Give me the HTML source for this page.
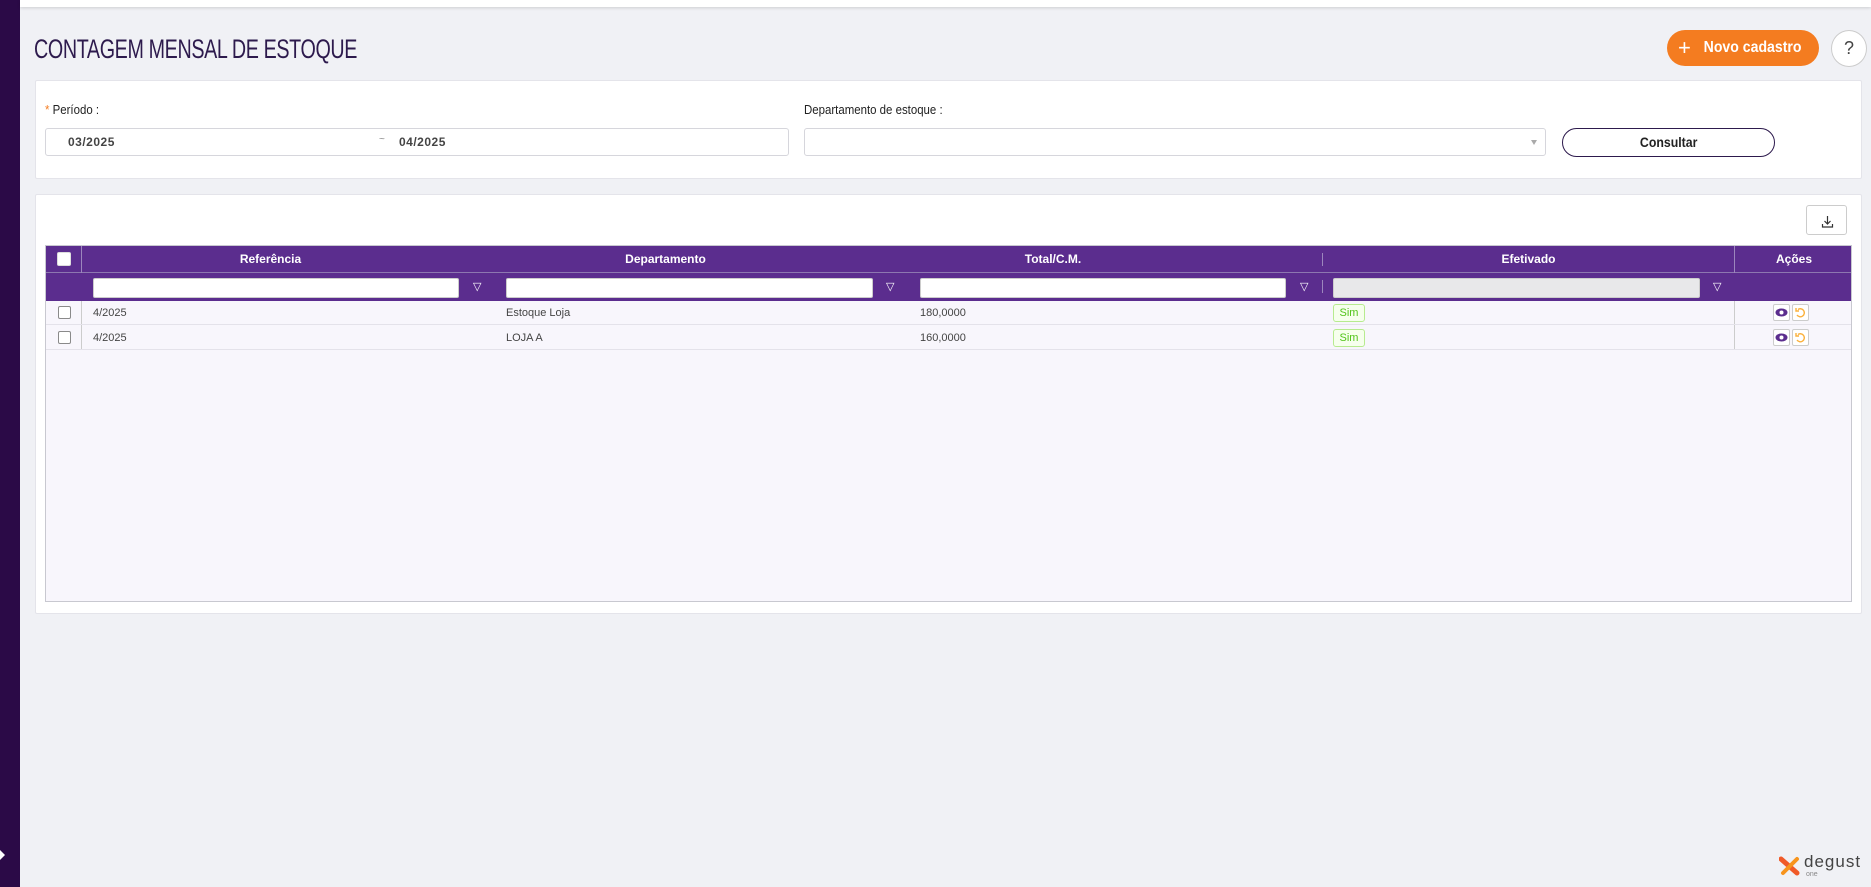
<!DOCTYPE html>
<html><head><meta charset="utf-8"><style>
*{box-sizing:border-box;margin:0;padding:0}
body{width:1871px;height:887px;background:#f0f1f5;font-family:"Liberation Sans",sans-serif;position:relative;overflow:hidden;color:#333}
.side{position:absolute;left:0;top:0;width:20px;height:887px;background:#2b0a47}
.side:after{content:"";position:absolute;left:0;top:850px;border-left:5px solid #fff;border-top:5px solid transparent;border-bottom:5px solid transparent}
.topbar{position:absolute;left:20px;top:0;right:0;height:7px;background:#fff;box-shadow:0 1px 3px rgba(0,0,0,.15)}
.title{position:absolute;left:34px;top:34px;font-size:27px;color:#2d1a4d;font-weight:400;letter-spacing:-.5px;transform:scaleX(.73);transform-origin:left;white-space:nowrap}
.btn-new{position:absolute;left:1667px;top:30px;width:152px;height:36px;background:#f47c20;border-radius:18px;color:#fff;font-weight:bold;font-size:16px;display:flex;align-items:center;justify-content:center;gap:6px}
.btn-new b{font-size:22px;font-weight:400;line-height:1}
.btn-new span{display:inline-block;transform:scaleX(.88)}
.help{position:absolute;left:1831px;top:30px;width:36px;height:37px;border-radius:50%;border:1px solid #ccc;background:#fff;text-align:center;line-height:35px;font-size:18px;color:#444}
.card{position:absolute;left:35px;width:1827px;background:#fff;border:1px solid #e4e4ea;border-radius:2px}
.lbl{position:absolute;font-size:13px;color:#222;transform:scaleX(.88);transform-origin:left;white-space:nowrap}
.inp{position:absolute;height:28px;border:1px solid #d6d6dc;border-radius:3px;background:#fff}
.consult{position:absolute;left:1562px;top:128px;width:213px;height:29px;border:1.5px solid #2d1a4d;border-radius:15px;text-align:center;line-height:26px;font-weight:bold;font-size:14px;color:#222}
.consult span{display:inline-block;transform:scaleX(.88)}
.tbl{position:absolute;left:45px;top:245px;width:1807px;height:357px;border:1px solid #c8c8d0;background:#f8f6fc}
.hdr{position:absolute;left:0;top:0;width:100%;height:27px;background:#5b2d8e;border-bottom:1px solid #8d77b0}
.frow{position:absolute;left:0;top:27px;width:100%;height:28px;background:#5b2d8e}
.hc{position:absolute;top:0;height:27px;line-height:27px;color:#fff;font-weight:bold;font-size:12px;text-align:center}
.vl{position:absolute;width:1px;background:#aaa;}
.fi{position:absolute;top:5px;height:20px;background:#fff;border:1px solid #ccc;border-radius:2px}
.fic{position:absolute;top:7px;color:#fff;font-size:11px}
.row{position:absolute;left:0;width:100%;height:24px;font-size:11px;color:#444;line-height:24px;border-bottom:1px solid #e4e2ea}
.cb{position:absolute;width:13px;height:13px;border:1px solid #8a8a8a;border-radius:2px;background:#fff}
.sim{position:absolute;left:1287px;top:3px;width:32px;height:18px;border:1px solid #b7eb8f;background:#f6ffed;color:#52c41a;border-radius:3px;font-size:11px;line-height:16px;text-align:center}
.ab{position:absolute;top:3px;width:17px;height:17px;border:1px solid #ccc;border-radius:2px;background:#fff}
</style></head><body>
<div class="side"></div>
<div class="topbar"></div>
<div class="title">CONTAGEM MENSAL DE ESTOQUE</div>
<div class="btn-new"><b>+</b><span>Novo cadastro</span></div>
<div class="help">?</div>

<div class="card" style="top:80px;height:99px"></div>
<div class="lbl" style="left:45px;top:102px"><span style="color:#f47c20">*</span> Período :</div>
<div class="inp" style="left:45px;top:128px;width:744px"><span style="position:absolute;left:22px;top:6px;font-size:12px;font-weight:bold;color:#444;letter-spacing:.5px">03/2025</span><span style="position:absolute;left:333px;top:5px;font-size:10px;color:#888">~</span><span style="position:absolute;left:353px;top:6px;font-size:12px;font-weight:bold;color:#444;letter-spacing:.5px">04/2025</span></div>
<div class="lbl" style="left:804px;top:102px">Departamento de estoque :</div>
<div class="inp" style="left:804px;top:128px;width:742px"><span style="position:absolute;right:8px;top:11px;border-top:5px solid #aaa;border-left:3px solid transparent;border-right:3px solid transparent"></span></div>
<div class="consult"><span>Consultar</span></div>

<div class="card" style="top:194px;height:420px"></div>
<div style="position:absolute;left:1806px;top:205px;width:41px;height:30px;border:1px solid #ccc;border-radius:3px;background:#fff">
<svg width="41" height="30" viewBox="0 0 41 30"><path d="M20.5 10v8M17.5 15l3 3 3-3M15.5 18v3h10v-3" stroke="#333" stroke-width="1.2" fill="none"/></svg></div>

<div class="tbl">
 <div class="hdr">
  <div class="cb" style="left:11px;top:6px;width:14px;height:14px;border-color:#ddd"></div>
  <div class="vl" style="left:35px;top:0;height:55px;background:#9c86bd"></div>
  <div class="hc" style="left:36px;width:377px">Referência</div>
  <div class="hc" style="left:413px;width:413px">Departamento</div>
  <div class="hc" style="left:826px;width:362px">Total/C.M.</div>
  <div class="vl" style="left:1276px;top:7px;height:13px;background:#9c86bd"></div>
  <div class="hc" style="left:1276px;width:413px">Efetivado</div>
  <div class="vl" style="left:1688px;top:0;height:55px;background:#9c86bd"></div>
  <div class="hc" style="left:1689px;width:118px">Ações</div>
 </div>
 <div class="frow">
  <div class="fi" style="left:47px;width:366px"></div><div class="fic" style="left:427px">▽</div>
  <div class="fi" style="left:460px;width:367px"></div><div class="fic" style="left:840px">▽</div>
  <div class="fi" style="left:874px;width:366px"></div><div class="fic" style="left:1254px">▽</div>
  <div class="vl" style="left:1276px;top:7px;height:13px;background:#9c86bd"></div>
  <div class="fi" style="left:1287px;width:367px;background:#e8e8ea"></div><div class="fic" style="left:1667px">▽</div>
 </div>
 <div class="vl" style="left:35px;top:55px;height:48px;background:#ccc"></div>
 <div class="vl" style="left:1688px;top:55px;height:48px;background:#ccc"></div>
 <div class="row" style="top:55px">
  <div class="cb" style="left:12px;top:5px"></div>
  <span style="position:absolute;left:47px">4/2025</span>
  <span style="position:absolute;left:460px">Estoque Loja</span>
  <span style="position:absolute;left:874px">180,0000</span>
  <div class="sim">Sim</div>
  <div class="ab" style="left:1727px"><svg width="15" height="15" viewBox="0 0 15 15"><ellipse cx="7.5" cy="7.5" rx="6" ry="4" fill="#5b2d8e"/><circle cx="7.5" cy="7.5" r="2" fill="#fff"/></svg></div>
  <div class="ab" style="left:1746px"><svg width="15" height="15" viewBox="0 0 15 15"><path d="M5 4.5A4 4 0 1 1 4 10M3 3v3h3" stroke="#fbb03b" stroke-width="1.4" fill="none"/></svg></div>
 </div>
 <div class="row" style="top:80px">
  <div class="cb" style="left:12px;top:5px"></div>
  <span style="position:absolute;left:47px">4/2025</span>
  <span style="position:absolute;left:460px">LOJA A</span>
  <span style="position:absolute;left:874px">160,0000</span>
  <div class="sim">Sim</div>
  <div class="ab" style="left:1727px"><svg width="15" height="15" viewBox="0 0 15 15"><ellipse cx="7.5" cy="7.5" rx="6" ry="4" fill="#5b2d8e"/><circle cx="7.5" cy="7.5" r="2" fill="#fff"/></svg></div>
  <div class="ab" style="left:1746px"><svg width="15" height="15" viewBox="0 0 15 15"><path d="M5 4.5A4 4 0 1 1 4 10M3 3v3h3" stroke="#fbb03b" stroke-width="1.4" fill="none"/></svg></div>
 </div>
</div>

<div style="position:absolute;left:1779px;top:855px">
<svg width="22" height="22" viewBox="0 0 22 22"><path d="M2 4l16 14" stroke="#f05a28" stroke-width="5" stroke-linecap="round"/><path d="M18 4L4 18" stroke="#f7941d" stroke-width="4" stroke-linecap="round"/></svg></div>
<div style="position:absolute;left:1804px;top:852px;font-size:17px;color:#444;letter-spacing:1px">degust</div>
<div style="position:absolute;left:1806px;top:871px;font-size:7px;color:#888">one</div>
</body></html>
